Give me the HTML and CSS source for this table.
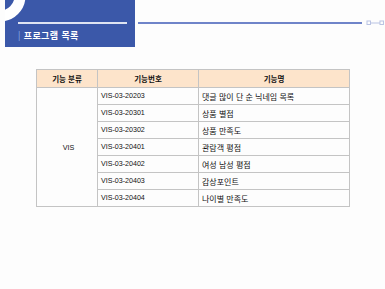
FILE: index.html
```html
<!DOCTYPE html>
<html lang="ko">
<head>
<meta charset="utf-8">
<link rel="stylesheet" href="styles.css">
</head>
<body>
<header class="top">
  <div class="panel">
    <svg class="ring" width="30" height="26" viewBox="0 0 30 26"><circle cx="0" cy="-4" r="20" fill="none" stroke="#ffffff" stroke-width="11"/></svg>
    <div class="panel-line"></div>
    <div class="title"><span class="bar">|</span> 프로그램 목록</div>
  </div>
  <div class="rule"></div>
  <svg class="conn" width="20" height="8" viewBox="0 0 20 8"><rect x="2" y="2" width="3.5" height="3.5" fill="none" stroke="#b9c3e3" stroke-width="1"/><line x1="5.5" y1="4" x2="15" y2="4" stroke="#b9c3e3" stroke-width="1"/><rect x="15" y="2" width="3.5" height="3.5" fill="none" stroke="#b9c3e3" stroke-width="1"/></svg>
</header>
<main class="content">
  <table class="grid">
    <colgroup><col class="c1"><col class="c2"><col class="c3"></colgroup>
    <thead>
      <tr><th>기능 분류</th><th>기능번호</th><th>기능명</th></tr>
    </thead>
    <tbody>
      <tr><td class="cat" rowspan="7">VIS</td><td class="code">VIS-03-20203</td><td class="name">댓글 많이 단 순 닉네임 목록</td></tr>
      <tr><td class="code">VIS-03-20301</td><td class="name">상품 별점</td></tr>
      <tr><td class="code">VIS-03-20302</td><td class="name">상품 만족도</td></tr>
      <tr><td class="code">VIS-03-20401</td><td class="name">관람객 평점</td></tr>
      <tr><td class="code">VIS-03-20402</td><td class="name">여성 남성 평점</td></tr>
      <tr><td class="code">VIS-03-20403</td><td class="name">감상포인트</td></tr>
      <tr><td class="code">VIS-03-20404</td><td class="name">나이별 만족도</td></tr>
    </tbody>
  </table>
</main>
</body>
</html>
```
FILE: styles.css
```css
html, body {
  margin: 0;
  padding: 0;
  background: #fdfdfd;
}
body {
  width: 385px;
  height: 289px;
  overflow: hidden;
  font-family: "Liberation Sans", "Noto Sans CJK KR", sans-serif;
}
.top {
  display: flex;
  align-items: flex-start;
  height: 47px;
}
.panel {
  position: relative;
  margin-left: 5px;
  width: 130px;
  height: 47px;
  background: #3b58a9;
  overflow: hidden;
}
.ring {
  position: absolute;
  left: -5px;
  top: 0;
}
.panel-line {
  margin: 22px 0 0 13px;
  width: 109px;
  height: 2px;
  background: #dfe4f2;
}
.title {
  margin: 6px 0 0 13px;
  color: #ffffff;
  font-family: "Noto Sans CJK KR", sans-serif;
  font-size: 9px;
  font-weight: 700;
  line-height: 12px;
  letter-spacing: 0.4px;
}
.bar {
  color: #8fb4ea;
  font-weight: 400;
}
.rule {
  margin: 22px 0 0 3px;
  width: 225px;
  height: 2px;
  background: #6f84c9;
}
.conn {
  margin: 19px 0 0 3px;
}
.content {
  padding: 22px 0 0 36px;
}
.grid {
  border-collapse: collapse;
  width: 313px;
  table-layout: fixed;
}
.c1 { width: 61px; }
.c2 { width: 101px; }
.c3 { width: 151px; }
.grid th, .grid td {
  border: 1px solid #c4c4c4;
  padding: 0 0 0 3px;
  color: #111111;
  white-space: nowrap;
}
.grid th {
  height: 17px;
  background: #fde4cb;
  font-family: "Noto Sans CJK KR", sans-serif;
  font-size: 7.5px;
  font-weight: 700;
  text-align: center;
  padding: 0;
}
.grid td {
  height: 16px;
}
.cat {
  text-align: center;
  font-size: 7.2px;
  padding: 0;
}
.code {
  font-size: 7.1px;
}
.name {
  font-family: "Noto Sans CJK KR", sans-serif;
  font-size: 8px;
}
```
